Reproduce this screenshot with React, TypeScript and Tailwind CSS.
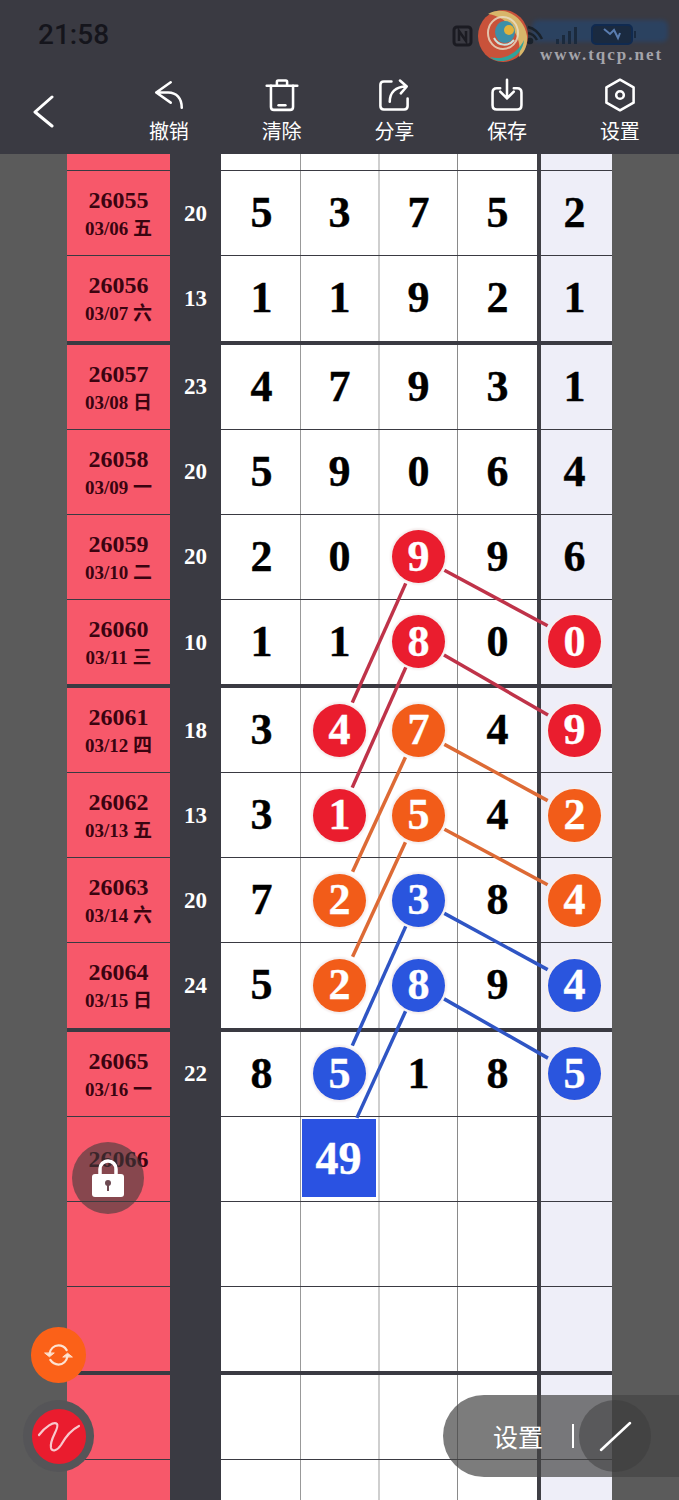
const serif = "font-['Liberation_Serif','Noto_Sans_CJK_SC',serif] font-bold";
const heavy = "[-webkit-text-stroke:0.4px_currentColor]";

type Cell = number | string | null;

type Row = {
  id?: string;
  date?: string;
  sum?: number;
  cells: Cell[];
  end?: boolean;
};

// r / o / b suffix = ball colour
const rows: Row[] = [
  { id: "26055", date: "03/06 五", sum: 20, cells: [5, 3, 7, 5, 2] },
  { id: "26056", date: "03/07 六", sum: 13, cells: [1, 1, 9, 2, 1], end: true },
  { id: "26057", date: "03/08 日", sum: 23, cells: [4, 7, 9, 3, 1] },
  { id: "26058", date: "03/09 一", sum: 20, cells: [5, 9, 0, 6, 4] },
  { id: "26059", date: "03/10 二", sum: 20, cells: [2, 0, "9r", 9, 6] },
  { id: "26060", date: "03/11 三", sum: 10, cells: [1, 1, "8r", 0, "0r"], end: true },
  { id: "26061", date: "03/12 四", sum: 18, cells: [3, "4r", "7o", 4, "9r"] },
  { id: "26062", date: "03/13 五", sum: 13, cells: [3, "1r", "5o", 4, "2o"] },
  { id: "26063", date: "03/14 六", sum: 20, cells: [7, "2o", "3b", 8, "4o"] },
  { id: "26064", date: "03/15 日", sum: 24, cells: [5, "2o", "8b", 9, "4b"], end: true },
  { id: "26065", date: "03/16 一", sum: 22, cells: [8, "5b", 1, 8, "5b"] },
  { id: "26066", cells: [null, "49", null, null, null] },
  { cells: [null, null, null, null, null] },
  { cells: [null, null, null, null, null], end: true },
  { cells: [null, null, null, null, null] },
  { cells: [null, null, null, null, null] },
];

const ballColor: Record<string, string> = {
  r: "bg-[#ea1d2e]",
  o: "bg-[#f25c19]",
  b: "bg-[#2a55de]",
};

const cellClass = [
  "w-[80px] border-r border-[#999999] bg-white pl-[2px]",
  "w-[79px] border-r-2 border-[#cfcfcf] bg-white",
  "w-[78px] border-r border-[#8a8a8a] bg-white",
  "w-[79px] bg-white",
  "w-[75px] border-l-4 border-[#3f3f45] bg-[#eeeef8] pr-1",
];

// [x1, y1, x2, y2, colour, gap at the far end]
const links: [number, number, number, number, string, number][] = [
  [418, 556, 574, 640, "#bf3349", 30],
  [418, 556, 340, 730, "#bf3349", 30],
  [418, 640, 574, 730, "#bf3349", 30],
  [418, 640, 340, 815, "#bf3349", 30],
  [418, 730, 574, 815, "#dd6a35", 30],
  [418, 730, 340, 899, "#dd6a35", 30],
  [418, 815, 574, 899, "#dd6a35", 30],
  [418, 815, 340, 984, "#dd6a35", 30],
  [418, 899, 574, 984, "#2f55c4", 30],
  [418, 899, 340, 1073, "#2f55c4", 30],
  [418, 984, 574, 1073, "#2f55c4", 30],
  [418, 984, 339, 1157, "#2f55c4", 43],
];

function Links() {
  return (
    <svg className="absolute left-0 top-0 pointer-events-none" width="679" height="1500" viewBox="0 0 679 1500">
      {links.map(([x1, y1, x2, y2, color, gap]) => {
        const len = Math.hypot(x2 - x1, y2 - y1);
        const ux = (x2 - x1) / len;
        const uy = (y2 - y1) / len;
        return (
          <line
            key={`${x1}-${y1}-${x2}-${y2}`}
            x1={x1 + ux * 30}
            y1={y1 + uy * 30}
            x2={x2 - ux * gap}
            y2={y2 - uy * gap}
            stroke={color}
            strokeWidth="3.500"
          />
        );
      })}
    </svg>
  );
}

function CellValue({ value }: { value: Cell }) {
  if (value === null) return null;
  if (value === "49") {
    return (
      <div className={`w-[74px] h-[78px] mb-[1px] mr-[2px] flex items-center justify-center bg-[#2a52e2] text-white text-[46px] ${serif} ${heavy}`}>
        49
      </div>
    );
  }
  if (typeof value === "string") {
    return (
      <div
        className={`w-[53px] h-[53px] rounded-full flex items-center justify-center text-white text-[44px] leading-none shadow-[0_0_2px_2px_#f5eeee] ${ballColor[value[1]]} ${serif} ${heavy}`}
      >
        {value[0]}
      </div>
    );
  }
  return <span className={`text-black text-[44px] leading-none ${serif} ${heavy}`}>{value}</span>;
}

function TableRow({ row }: { row: Row }) {
  return (
    <div
      className={`flex w-[545px] ml-[67px] border-[#3a3a42] ${
        row.end ? "h-[88.5px] border-b-4" : "h-[85px] border-b"
      }`}
    >
      <div className={`w-[103px] bg-[#f7586a] flex flex-col items-center justify-center text-[#3a0410] ${row.date ? "pt-[3px]" : ""} ${serif}`}>
        {row.id && <div className="text-[24px] leading-[28px]">{row.id}</div>}
        {row.date && <div className="text-[19px] leading-[29px]">{row.date}</div>}
      </div>
      <div className={`w-[51px] pt-[2px] bg-[#3a3a42] flex items-center justify-center text-white text-[23px] ${serif}`}>
        {row.sum}
      </div>
      {row.cells.map((value, i) => (
        <div key={i} className={`flex items-center justify-center ${cellClass[i]}`}>
          <CellValue value={value} />
        </div>
      ))}
    </div>
  );
}

const toolIcons = {
  undo: <path d="M22 5 5 17l17 12M5 17h14c10 0 16 7 16 18" />,
  clear: (
    <>
      <path d="M2 9h36M14 9V4.500q0-1.500 1.500-1.500h9q1.500 0 1.500 1.500V9" />
      <path d="M7 9v25q0 3.500 3.500 3.500h19q3.500 0 3.500-3.500V9" />
      <path d="M16 32h8" />
    </>
  ),
  share: (
    <>
      <path d="M17 4H8q-4 0-4 4v25q0 4 4 4h24q4 0 4-4v-9" />
      <path d="M15 28c0-11 7-18 19-18M27 3l8 7-7 8" />
    </>
  ),
  save: (
    <>
      <path d="M12 12H8q-5 0-5 5v15q0 5 5 5h24q5 0 5-5V17q0-5-5-5h-4" />
      <path d="M20 2v22M12 16l8 8 8-8" />
    </>
  ),
  settings: (
    <>
      <path d="M20 2 36 11v18L20 38 4 29V11z" />
      <circle cx="20" cy="20" r="4.500" />
    </>
  ),
};

const tools: { label: string; icon: keyof typeof toolIcons }[] = [
  { label: "撤销", icon: "undo" },
  { label: "清除", icon: "clear" },
  { label: "分享", icon: "share" },
  { label: "保存", icon: "save" },
  { label: "设置", icon: "settings" },
];

function StatusIcons() {
  return (
    <svg width="239" height="70" viewBox="440 0 239 70" className="block">
      {/* nfc */}
      <g fill="none" stroke="#1b1b22" strokeWidth="3">
        <rect x="454" y="27" width="17" height="18" rx="3" />
        <path d="M459 41V31l7 10V31" strokeWidth="2.500" />
      </g>
      {/* blue watermark text, blurred */}
      <rect x="532" y="20" width="136" height="22" rx="6" fill="#1d4a7f" opacity="0.5" className="blur-[2px]" />
      {/* wifi */}
      <g fill="none" stroke="#1a222b" strokeWidth="2.500">
        <path d="M528 27q9 2 14 12M528 33q6 1 9 7" />
        <circle cx="530" cy="41" r="2" fill="#1a222b" />
      </g>
      {/* signal */}
      <g fill="#1b2a3d">
        <rect x="556" y="39" width="3" height="5" />
        <rect x="562" y="35" width="3" height="9" />
        <rect x="568" y="31" width="3" height="13" />
        <rect x="574" y="27" width="3" height="17" />
      </g>
      {/* battery */}
      <rect x="592" y="25" width="40" height="19" rx="4" fill="#1a2a40" stroke="#102a50" strokeWidth="2" />
      <rect x="634" y="31" width="2" height="7" fill="#1a2a40" />
      <path d="M604 29l6 5 4-4 4 8 2-5" fill="none" stroke="#5a7db0" strokeWidth="2" />
      {/* site logo */}
      <ellipse cx="503" cy="36" rx="25" ry="26" fill="#c9523a" />
      <path d="M488 14c16-9 36 2 39 22 1 8-2 16-8 21 4-20-10-40-31-43z" fill="#d8b66a" />
      <path d="M524 40c-1 12-12 22-24 21-4 0-8-2-10-4 14 4 28-4 34-17z" fill="#2fa39b" />
      <ellipse cx="503" cy="33" rx="15" ry="16" fill="none" stroke="#e8e0c8" strokeWidth="2" opacity="0.8" />
      <ellipse cx="505" cy="32" rx="10" ry="11" fill="#3d8fa8" />
      <circle cx="509" cy="30" r="5" fill="#e2b23c" />
      <path d="M494 38c4 8 14 9 20 2" fill="none" stroke="#c9e2dc" strokeWidth="2" />
    </svg>
  );
}

export default function App() {
  return (
    <div className="relative w-[679px] h-[1500px] overflow-hidden bg-[#5b5b5b]">
      {/* Header */}
      <header className="h-[154px] bg-[#3a3a42]">
        <div className="relative flex justify-between h-[70px]">
          <span className="pl-[38px] pt-[17px] text-[28px] leading-[36px] font-medium text-[#15151c] font-['Roboto',sans-serif]">
            21:58
          </span>
          <StatusIcons />
          <span className="absolute left-[540px] top-[45px] text-[17px] leading-[20px] tracking-[2px] text-[#a4a4aa] font-['Liberation_Serif',serif] font-bold">
            www.tqcp.net
          </span>
        </div>
        <div className="flex h-[84px]">
          <div className="w-[112.500px] pl-[33px] pt-[24px]">
            <svg width="22" height="34" viewBox="0 0 22 34" fill="none" stroke="#fff" strokeWidth="3" strokeLinecap="round" strokeLinejoin="round">
              <path d="M19 3 2 18l17 14" />
            </svg>
          </div>
          {tools.map(({ label, icon }) => (
            <div key={label} className="w-[112.750px] flex flex-col items-center text-white">
              <svg
                width="34"
                height="34"
                viewBox="0 0 40 40"
                fill="none"
                stroke="currentColor"
                strokeWidth="3"
                strokeLinecap="round"
                strokeLinejoin="round"
                className="mt-[8px]"
              >
                {toolIcons[icon]}
              </svg>
              <span className="mt-[6px] text-[20px] leading-[26px] font-['Noto_Sans_CJK_SC',sans-serif]">{label}</span>
            </div>
          ))}
        </div>
      </header>

      {/* Table */}
      <div className="flex w-[545px] ml-[67px] h-[17px] border-b-[1.5px] border-[#3a3a42]">
        <div className="w-[103px] bg-[#f7586a]" />
        <div className="w-[51px] bg-[#3a3a42]" />
        {cellClass.map((c, i) => (
          <div key={i} className={c} />
        ))}
      </div>
      {rows.map((row, i) => (
        <TableRow key={i} row={row} />
      ))}

      <Links />

      {/* Floating buttons */}
      <div className="absolute left-[72px] top-[1142px] w-[72px] h-[72px] rounded-full bg-[#3c3c3c]/60 flex items-center justify-center">
        <svg width="34" height="40" viewBox="0 0 34 40">
          <path d="M9 18v-7a8 8 0 0 1 16 0v7" fill="none" stroke="#fff" strokeWidth="3.500" />
          <rect x="1" y="16" width="32" height="23" rx="3" fill="#fff" />
          <circle cx="17" cy="25" r="3" fill="#6d4a52" />
          <rect x="16" y="26" width="2" height="7" fill="#6d4a52" />
        </svg>
      </div>

      <div className="absolute left-[31px] top-[1327px] w-[55px] h-[56px] rounded-full bg-[#fb6118] flex items-center justify-center">
        <svg width="29" height="26" viewBox="0 0 32 28" fill="none" stroke="#fde3d2" strokeWidth="2.500" strokeLinecap="round">
          <path d="M6 13C7 7 11 3.500 16 3.500c4 0 7 2 9 5" />
          <path d="M26 15c-1 6-5 9.500-10 9.500-4 0-7-2-9-5" />
          <path d="M1 12l5 4 5-4z" fill="#fde3d2" strokeWidth="1" />
          <path d="M21 16l5-4 5 4z" fill="#fde3d2" strokeWidth="1" />
        </svg>
      </div>

      <div className="absolute left-[23px] top-[1400px] w-[71px] h-[72px] rounded-full bg-[#555558] flex items-center justify-center">
        <div className="w-[54px] h-[55px] rounded-full bg-[#ea1c2e] flex items-center justify-center">
          <svg width="44" height="44" viewBox="0 0 44 44" fill="none" stroke="#f8c8cc" strokeWidth="2.200" strokeLinecap="round">
            <path d="M2 21C8 13 17 7 20 10c3 4-8 15-6 24 1 4 6 3 10-3 5-9 10-15 18-19" />
          </svg>
        </div>
      </div>

      <div className="absolute left-[443px] top-[1395px] w-[236px] h-[82px] rounded-l-[41px] bg-[#444444]/70 flex items-center">
        <span className="ml-[50px] w-[50px] text-white text-[25px] leading-none whitespace-nowrap font-['Noto_Sans_CJK_SC',sans-serif]">
          设置
        </span>
        <div className="ml-[29px] w-[2px] h-[24px] bg-white" />
        <div className="ml-[5px] w-[72px] h-[72px] rounded-full bg-[#3c3c3c]/50 flex items-center justify-center">
          <svg width="34" height="32" viewBox="0 0 34 32" stroke="#fff" strokeWidth="2.500" strokeLinecap="round">
            <path d="M3 30 32 3" />
          </svg>
        </div>
      </div>
    </div>
  );
}
